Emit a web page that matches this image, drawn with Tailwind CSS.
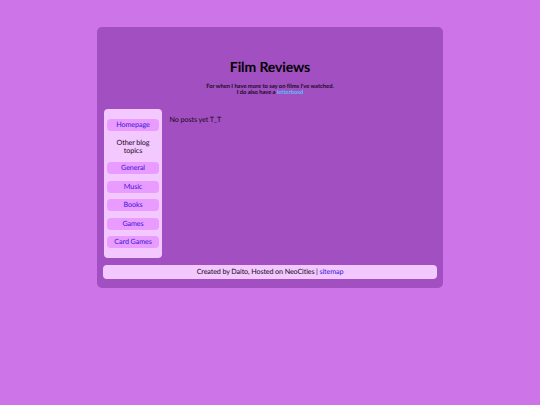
<!DOCTYPE html>
<html lang="en">
<head>
    <meta charset="UTF-8">
    <title>Film Reviews</title>
    <script src="https://cdn.jsdelivr.net/npm/@tailwindcss/browser@4"></script>
</head>
<body class="bg-[#cd75e8] min-h-screen font-['Lato',sans-serif] text-[#1a0a24] [text-rendering:geometricPrecision]">
    <div class="w-[346px] h-[261px] ml-[97px] pt-[27px] box-content">
        <div class="bg-[#a14fc1] rounded-[5px] h-[261px] pl-[6px] pr-[6px] flex flex-col">
            <!-- Header -->
            <div class="h-[82px] pt-[30px] text-center">
                <h1 class="text-[14px] leading-[20px] font-bold text-black tracking-[-0.1px]">Film Reviews</h1>
                <p class="mt-[6.5px] text-[5.8px] leading-[6.5px] font-bold tracking-[-0.03px]">For when I have more to say on films I've watched.<br>I do also have a <a href="#" class="text-[#4fc3ff]">letterboxd</a></p>
            </div>

            <div class="flex h-[149px]">
                <!-- Sidebar -->
                <div class="w-[58px] ml-[1px] bg-[#f2c8ff] rounded-[4px] px-[3px] pt-[10px] text-center text-[7.2px] leading-[12px] tracking-[-0.1px]">
                    <a href="#" class="block h-[12px] rounded-[4px] bg-[#ea9bff] text-[#3d16d8]">Homepage</a>
                    <p class="mt-[8px] mb-[8px] leading-[7.5px] text-[#1a0a24]">Other blog topics</p>
                    <div class="flex flex-col gap-[6.5px]">
                        <a href="#" class="block h-[12px] rounded-[4px] bg-[#ea9bff] text-[#3d16d8]">General</a>
                        <a href="#" class="block h-[12px] rounded-[4px] bg-[#ea9bff] text-[#3d16d8]">Music</a>
                        <a href="#" class="block h-[12px] rounded-[4px] bg-[#ea9bff] text-[#3d16d8]">Books</a>
                        <a href="#" class="block h-[12px] rounded-[4px] bg-[#ea9bff] text-[#3d16d8]">Games</a>
                        <a href="#" class="block h-[12px] rounded-[4px] bg-[#ea9bff] text-[#3d16d8]">Card Games</a>
                    </div>
                </div>

                <!-- Posts -->
                <div class="pl-[7.5px] pt-[6px] text-[7.2px] leading-[10px] tracking-[-0.1px]">No posts yet T_T</div>
            </div>

            <!-- Footer -->
            <div class="mt-[6.5px] h-[14.5px] bg-[#f2c8ff] rounded-[4px] text-center text-[7.2px] leading-[14.5px] tracking-[-0.13px]">
                Created by Daito, Hosted on NeoCities | <a href="#" class="text-[#3d16d8]">sitemap</a>
            </div>
        </div>
    </div>
</body>
</html>
